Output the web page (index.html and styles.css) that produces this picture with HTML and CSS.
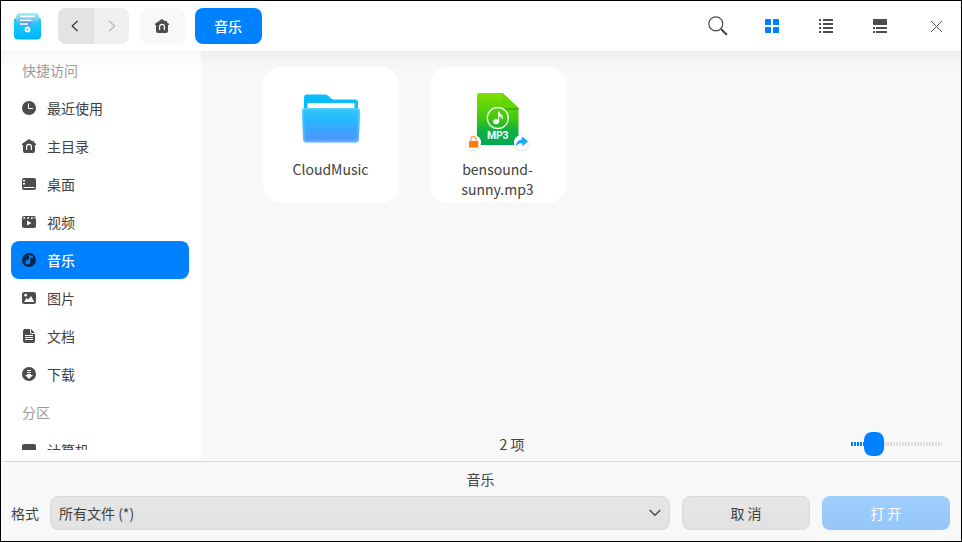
FILE: index.html
```html
<!DOCTYPE html>
<html lang="zh-CN">
<head>
<meta charset="utf-8">
<title>音乐</title>
<link rel="stylesheet" href="styles.css">
</head>
<body>
<div class="window">
  <header class="titlebar">
    <svg class="logo" width="27" height="28" viewBox="0 0 27 28">
      <defs>
        <linearGradient id="lg1" x1="0" y1="0" x2="0" y2="1"><stop offset="0" stop-color="#a3f3ee"/><stop offset=".5" stop-color="#53b3f3"/><stop offset="1" stop-color="#438eef"/></linearGradient>
        <linearGradient id="lg2" x1="0" y1="0" x2="0" y2="1"><stop offset="0" stop-color="#21d0f5"/><stop offset="1" stop-color="#00b4ff"/></linearGradient>
      </defs>
      <rect x="0" y="5" width="27" height="20" rx="3" fill="#16b8ec"/>
      <rect x="2" y="0" width="23" height="21" rx="4" fill="url(#lg1)"/>
      <path d="M0 6.500 11 13.500q2.500 1.500 5 0L27 6.500V22.500q0 4-4 4H4q-4 0-4-4z" fill="url(#lg2)"/>
      <path d="M7 8h12l-4.500 5q-1 .8-2.500 0L6 9.800z" fill="#4d9cf2"/>
      <path d="M6 3.500h14.500M6 7.500h11.500M6 11h8" stroke="#fff" stroke-width="1.300"/>
      <circle cx="13.500" cy="16.500" r="2" fill="none" stroke="#fff" stroke-width="1.800"/>
    </svg>
    <div class="nav">
      <div class="nav-btn back"><svg width="8" height="12" viewBox="0 0 8 12"><path d="M6.500 1 1.200 6l5.300 5" fill="none" stroke="#333" stroke-width="1.200"/></svg></div>
      <div class="nav-btn"><svg width="8" height="12" viewBox="0 0 8 12"><path d="M1.300 1 6.600 6l-5.300 5" fill="none" stroke="#b5b5b5" stroke-width="1.200"/></svg></div>
    </div>
    <div class="home"><svg width="14" height="14" viewBox="0 0 14 14"><use href="#i-home"/></svg></div>
    <div class="crumb">音乐</div>
    <div class="tools">
      <svg class="t-search" width="20" height="20" viewBox="0 0 20 20" fill="none" stroke="#4c4c4c"><circle cx="7.800" cy="7.800" r="7" stroke-width="1.200"/><path d="m12.800 12.800 1.700 1.700" stroke-width="1.200"/><path d="m14 14 4.300 4.300" stroke-width="2.200" stroke-linecap="round"/></svg>
      <svg class="t-grid" width="14" height="14" viewBox="0 0 14 14" fill="#0081ff"><rect width="6" height="6" rx=".6"/><rect x="8" width="6" height="6" rx=".6"/><rect y="8" width="6" height="6" rx=".6"/><rect x="8" y="8" width="6" height="6" rx=".6"/></svg>
      <svg class="t-list" width="14" height="14" viewBox="0 0 14 14" fill="#4c4c4c"><path d="M0 0h2v2H0zM4 0h10v2H4zM0 4h2v2H0zM4 4h10v2H4zM0 8h2v2H0zM4 8h10v2H4zM0 12h2v2H0zM4 12h10v2H4z"/></svg>
      <svg class="t-detail" width="14" height="14" viewBox="0 0 14 14" fill="#4c4c4c"><rect width="14" height="6" rx=".8"/><path d="M0 8h2v2H0zM3 8h11v2H3zM0 12h2v2H0zM3 12h11v2H3z"/></svg>
      <svg class="t-close" width="11" height="11" viewBox="0 0 11 11"><path d="m0 0 11 11M11 0 0 11" stroke="#555"/></svg>
    </div>
  </header>

  <main class="main">
    <aside class="sidebar">
      <div class="group">快捷访问</div>
      <div class="item"><svg width="14" height="14" viewBox="0 0 14 14"><circle cx="7" cy="7" r="7"/><path d="M6.500 2.500v5h4.500" fill="none" stroke="#fff"/></svg><span>最近使用</span></div>
      <div class="item"><svg width="14" height="14" viewBox="0 0 14 14"><g id="i-home"><path d="M7 0 0 4.800V6h1v6q0 2 2 2h8q2 0 2-2V6h1V4.800L12 3.500V2h-1.500v.400z" fill="#4c4c4c"/><path d="M4.600 11V7.700a2.400 2.400 0 0 1 4.800 0V11" fill="none" stroke="#fff" stroke-width="1.200"/></g></svg><span>主目录</span></div>
      <div class="item"><svg width="14" height="14" viewBox="0 0 14 14"><path d="M2 1h10q2 0 2 2v7H0V3q0-2 2-2z"/><path d="M0 10h1.500v1h11v-1H14v1q0 2-2 2H2q-2 0-2-2z"/><path d="M1 3h2v1.500H1zM1 6h2v1.500H1z" fill="#fff"/></svg><span>桌面</span></div>
      <div class="item"><svg width="14" height="14" viewBox="0 0 14 14"><rect y="1" width="14" height="12" rx="2"/><path d="M2 2h1.300L2.500 4H1zM5.800 2h1.300L6.500 4H5zM9.600 2h1.300L10.300 4H8.800zM12.700 2h.8v2h-1zM5 5.500 9.500 8 5 10.500z" fill="#fff"/></svg><span>视频</span></div>
      <div class="item active"><svg width="14" height="14" viewBox="0 0 14 14"><circle cx="7" cy="7" r="7" fill="#092849"/><path d="M7 2h1.300q.6 1.200 2.700 1.200v1.900q-1.500.1-2.700-.5V9A2.400 2.400 0 1 1 7 6.800z" fill="#0081ff"/></svg><span>音乐</span></div>
      <div class="item"><svg width="14" height="14" viewBox="0 0 14 14"><rect y="1" width="14" height="12" rx="2.300"/><circle cx="3.700" cy="4.200" r="1.400" fill="#fff"/><path d="m2 11 2.600-4 1.700 1.600L9 5l3.300 6z" fill="#fff"/></svg><span>图片</span></div>
      <div class="item"><svg width="14" height="14" viewBox="0 0 14 14"><path d="M3 0h5v3q0 2 2 2h3v7q0 2-2 2H3q-2 0-2-2V2q0-2 2-2zM9 0l4 4h-3q-1 0-1-1z"/><path d="M3 6.500h8M3 8.500h8M3 10.500h8" stroke="#fff"/></svg><span>文档</span></div>
      <div class="item"><svg width="14" height="14" viewBox="0 0 14 14"><circle cx="7" cy="7" r="7"/><path d="M5 3h4v1H5zM5 5h4v1H5zM5 7h4v1h2l-4 4-4-4h2z" fill="#fff"/></svg><span>下载</span></div>
      <div class="group">分区</div>
      <div class="item"><svg width="14" height="14" viewBox="0 0 14 14"><rect y="1" width="14" height="10" rx="2"/><path d="M3 12h8v1H3z"/></svg><span>计算机</span></div>
    </aside>

    <section class="content">
      <div class="files">
        <div class="card">
          <svg class="pic" width="60" height="60" viewBox="0 0 60 60">
            <defs>
              <linearGradient id="fd" x1="0" y1="0" x2="0" y2="1"><stop offset="0" stop-color="#32c8fb"/><stop offset=".35" stop-color="#25b7ff"/><stop offset=".85" stop-color="#4b98ff"/><stop offset="1" stop-color="#55a5ff"/></linearGradient>
              <filter id="glow"><feGaussianBlur stdDeviation="1.200"/></filter>
              <clipPath id="fc"><path d="M4 19h52q3 0 3 3.500l-1.100 28q-.2 3-3.200 3H5.300q-3 0-3.200-3L1 22q0-3 3-3z"/></clipPath>
            </defs>
            <path d="M3 22V8.500q0-3 3-3H24q2 0 3.500 1.500l2.500 2.500q1 1 2.500 1h21.500q3 0 3 3V22z" fill="#08bdfd"/>
            <rect x="6.500" y="14" width="47" height="7" rx="1" fill="#fff"/>
            <g clip-path="url(#fc)"><path d="M0 19h60v35H0z" fill="url(#fd)"/><path d="M4 19h52q3 0 3 3.500l-1.100 28q-.2 3-3.200 3H5.300q-3 0-3.200-3L1 22q0-3 3-3z" fill="none" stroke="#76e0fa" stroke-width="2" filter="url(#glow)" opacity=".8"/></g>
          </svg>
          <div class="name">CloudMusic</div>
        </div>
        <div class="card">
          <svg class="pic wide" width="66" height="62" viewBox="0 0 66 62">
            <defs>
              <linearGradient id="mg" x1="0" y1="0" x2="0" y2="1"><stop offset="0" stop-color="#81e000"/><stop offset=".5" stop-color="#3fc713"/><stop offset=".72" stop-color="#0fb045"/><stop offset="1" stop-color="#00aa50"/></linearGradient>
              <linearGradient id="ms" x1="0" y1="0" x2="1" y2="1"><stop offset="0" stop-color="#168000" stop-opacity="0"/><stop offset="1" stop-color="#168000" stop-opacity=".5"/></linearGradient>
              <filter id="sh" x="-30%" y="-30%" width="160%" height="160%"><feDropShadow dx="0" dy=".5" stdDeviation=".9" flood-color="#000" flood-opacity=".22"/></filter>
            </defs>
            <path d="M15 4h22.500l16 15v34q0 3-3 3H15q-3 0-3-3V7q0-3 3-3z" fill="url(#mg)"/>
            <path d="M37.500 4v14l3 3h13v-2z" fill="url(#ms)"/>
            <path d="M37.500 4l16 15h-13q-3 0-3-3z" fill="#62d704"/>
            <circle cx="32.800" cy="29" r="10.500" fill="none" stroke="#eefbe6" stroke-width="1.300"/>
            <path d="M33 22.500h1.200q.6 2.300 3 3.600 1.400 2.500-.2 5 .2-3.200-2.800-3.800v5.400a3.200 2.600 0 1 1-1.200-2z" fill="#f5fff0"/>
            <text class="mp3" x="32.700" y="50.400" text-anchor="middle" textLength="21.500">MP3</text>
            <circle cx="8.500" cy="53.500" r="7.600" fill="#fff" filter="url(#sh)"/>
            <rect x="4" y="52" width="9.300" height="6.500" rx=".6" fill="#ff7b00"/>
            <path d="M5.900 52.500v-2.200a2.600 2.600 0 0 1 5.200 0v2.200" fill="none" stroke="#ff9c45" stroke-width="1.200"/>
            <circle cx="56.500" cy="53.500" r="7.600" fill="#fff" filter="url(#sh)"/>
            <path d="m56.800 47.200 6.200 5-5.600 5.300v-3.100q-4.400-.4-6.600 3.200.2-6.200 6-7z" fill="#18a8ff"/>
          </svg>
          <div class="name">bensound-<br>sunny.mp3</div>
        </div>
      </div>
      <div class="status">
        <div class="count">2 项</div>
        <div class="slider"><div class="ticks-on"></div><div class="ticks-off"></div><div class="handle"></div></div>
      </div>
    </section>
  </main>

  <footer class="footer">
    <div class="caption">音乐</div>
    <div class="row">
      <label class="label">格式</label>
      <div class="select"><span>所有文件 (*)</span><svg width="12" height="8" viewBox="0 0 12 8"><path d="m.7 1 5.300 5.300L11.300 1" fill="none" stroke="#4c4c4c" stroke-width="1.500"/></svg></div>
      <div class="btn">取 消</div>
      <div class="btn primary">打 开</div>
    </div>
  </footer>
</div>
</body>
</html>
```

FILE: styles.css
```css
* { box-sizing: border-box; }
body {
  margin: 0;
  font: 14px/20px "Noto Sans CJK SC", sans-serif;
  color: #414141;
}
svg { display: block; flex: none; }
.window {
  width: 962px;
  height: 542px;
  border: 1px solid #000;
  background: #f8f8f8;
  display: flex;
  flex-direction: column;
  overflow: hidden;
}
.titlebar {
  height: 50px;
  flex: none;
  background: #fff;
  display: flex;
  align-items: center;
  padding-left: 13px;
}
.logo { margin-top: 1px; }
.nav {
  display: flex;
  width: 71px;
  height: 36px;
  margin-left: 17.400px;
  border-radius: 8px;
  overflow: hidden;
  background: #efefef;
}
.nav-btn { flex: 1; display: flex; align-items: center; justify-content: center; padding-right: 2px; }
.nav-btn + .nav-btn { padding-right: 0; padding-left: 1px; }
.back { background: #e3e3e3; }
.home {
  width: 45px;
  height: 36px;
  margin-left: 10.600px;
  border-radius: 8px;
  background: #f8f8f8;
  display: flex;
  align-items: center;
  padding-left: 15px;
}
.crumb {
  width: 67px;
  height: 36px;
  margin-left: 10px;
  padding-right: 1px;
  border-radius: 8px;
  background: #0081ff;
  color: #fff;
  font-weight: 500;
  line-height: 37px;
  text-align: center;
}
.tools { margin-left: auto; display: flex; align-items: center; padding-right: 19px; }
.t-grid { margin-left: 37px; }
.t-list, .t-detail { margin-left: 40px; }
.t-close { margin: 1px 0 0 44px; }

.main { height: 410px; flex: none; display: flex; }
.sidebar {
  width: 200px;
  height: 409px;
  padding: 0 12px 0 10px;
  background: linear-gradient(#f7f7f7, #fff 20px);
  border-bottom: 10px solid #fff;
  overflow: hidden;
}
.group { height: 38px; padding-left: 11px; line-height: 39px; color: #9b9b9b; }
.item {
  height: 38px;
  padding-left: 11px;
  display: flex;
  align-items: center;
  gap: 11px;
  fill: #4c4c4c;
  border-radius: 8px;
}
.item span { line-height: 38px; }
.active { background: #0081ff; color: #fff; font-weight: 500; }
.content {
  flex: 1;
  display: flex;
  flex-direction: column;
  background: linear-gradient(#efefef, #f8f8f8 20px);
}
.files { flex: 1; display: flex; gap: 31px; padding: 16px 0 0 62px; }
.card {
  width: 136px;
  height: 136px;
  border-radius: 18px;
  background: #fff;
  display: flex;
  flex-direction: column;
  align-items: center;
}
.pic { margin-top: 22px; height: 60px; }
.wide { height: 62px; }
.name { text-align: center; margin-top: 10px; padding-right: 1px; }
.wide + .name { margin-top: 8px; }
.mp3 { font: 700 10.500px Roboto, sans-serif; fill: #fff; }
.status {
  height: 35px;
  flex: none;
  display: grid;
  grid-template-columns: 1fr 92px;
  padding: 0 18px 0 0;
  align-items: center;
}
.count { padding-left: 298.500px; }
.slider { display: flex; position: relative; height: 24px; align-items: center; }
.ticks-on { width: 18px; height: 4px; background: repeating-linear-gradient(90deg, #0081ff 0 2px, transparent 2px 3px); }
.ticks-off { width: 73px; height: 4px; background: repeating-linear-gradient(90deg, #dedede 0 2px, transparent 2px 3px); }
.handle { position: absolute; left: 13px; top: 0; width: 20px; height: 24px; border-radius: 8px; background: #0081ff; }

.footer { flex: 1; border-top: 1px solid #dcdcdc; padding: 7px 11px 0 10px; }
.caption { text-align: center; line-height: 20px; height: 27px; }
.row { display: flex; gap: 12px; }
.label { width: 27px; line-height: 34px; white-space: nowrap; }
.select, .btn {
  height: 34px;
  border: 1px solid #d9d9d9;
  border-radius: 8px;
  background: linear-gradient(#e6e6e6, #e2e2e2);
  line-height: 33px;
}
.select { width: 620px; padding: 0 8.500px 0 8px; display: flex; align-items: center; justify-content: space-between; }
.btn { width: 128px; text-align: center; }
.primary { border: 0; line-height: 35px; color: #fff; background: linear-gradient(#9fcefd, #95c6f9); }
```
